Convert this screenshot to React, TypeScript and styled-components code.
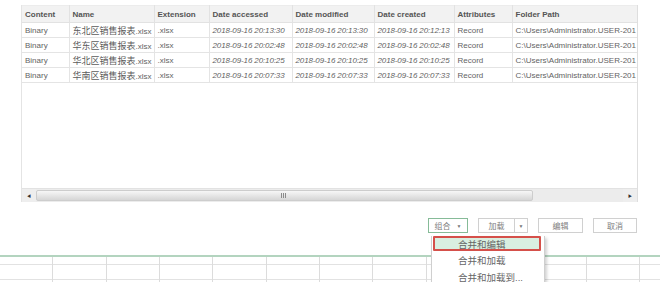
import React from "react";
import styled, { createGlobalStyle } from "styled-components";

const Global = createGlobalStyle`
  html, body { margin: 0; padding: 0; background: #ffffff; }
  body { width: 660px; height: 282px; overflow: hidden; font-family: "Liberation Sans", "Noto Sans CJK SC", sans-serif; }
`;

const Page = styled.div`
  position: relative;
  width: 660px;
  height: 282px;
  overflow: hidden;
  background: #fff;
`;

const Dialog = styled.div`
  height: 255px;
  padding: 5px 0 0 21px;
  box-sizing: border-box;
  display: flex;
  flex-direction: column;
`;

const Frame = styled.div`
  width: 617px;
  height: 197px;
  box-sizing: border-box;
  border-left: 1px solid #e4e4e4;
  border-right: 1px solid #dedede;
  display: flex;
  flex-direction: column;
`;

const TableArea = styled.div`
  flex: 1;
  overflow: hidden;
`;

const Table = styled.table`
  border-collapse: collapse;
  table-layout: fixed;
  width: 616px;
  font-size: 8px;
  color: #636363;
`;

const Th = styled.th`
  height: 16px;
  padding: 0 0 0 3px;
  text-align: left;
  font-weight: bold;
  color: #555;
  background: #f2f2f2;
  border: 1px solid #e2e2e2;
  border-top-color: #ececec;
  white-space: nowrap;
  overflow: hidden;
  &:first-child { border-left: none; }
  &:last-child { border-right: none; }
`;

const Td = styled.td<{ $italic?: boolean }>`
  height: 14px;
  padding: 0 0 0 3px;
  border: 1px solid #e4e4e4;
  white-space: nowrap;
  overflow: hidden;
  font-style: ${(p) => (p.$italic ? "italic" : "normal")};
  letter-spacing: ${(p) => (p.$italic ? "-0.12px" : "0")};
  &:first-child { border-left: none; }
  &:last-child { border-right: none; }
`;

const Cjk = styled.span`
  font-size: 9px;
  color: #5c5c5c;
`;

const Scrollbar = styled.div`
  height: 13px;
  display: flex;
  align-items: stretch;
  background: #ececec;
  border-top: 1px solid #e2e2e2;
`;

const ScrollBtn = styled.div`
  width: 14px;
  display: flex;
  align-items: center;
  justify-content: center;
  font-size: 4px;
  color: #333;
  background: #eeeeee;
`;

const Thumb = styled.div`
  width: 497px;
  margin: 1px 0;
  border: 1px solid #cdcdcd;
  border-radius: 2px;
  background: linear-gradient(#f7f7f7, #d6d6d6);
  display: flex;
  align-items: center;
  padding-left: 244px;
  box-sizing: border-box;
`;

const Grip = styled.div`
  width: 5px;
  height: 5px;
  background: repeating-linear-gradient(90deg, #8a8a8a 0 1px, transparent 1px 2px);
`;

const Track = styled.div`
  flex: 1;
`;

const Buttons = styled.div`
  margin-top: 16px;
  width: 616px;
  display: flex;
  justify-content: flex-end;
  gap: 10px;
`;

const Btn = styled.div<{ $w: number; $active?: boolean }>`
  width: ${(p) => p.$w}px;
  height: 15px;
  box-sizing: border-box;
  border: 1px solid ${(p) => (p.$active ? "#86bb98" : "#d0d0d0")};
  background: #fff;
  display: flex;
  align-items: center;
  justify-content: center;
  gap: 6px;
  font-size: 8px;
  color: #808080;
`;

const Split = styled.div`
  display: flex;
  height: 15px;
`;

const SplitMain = styled.div`
  width: 37px;
  box-sizing: border-box;
  border: 1px solid #d0d0d0;
  display: flex;
  align-items: center;
  justify-content: center;
  font-size: 8px;
  color: #808080;
`;

const SplitArrow = styled.div`
  width: 13px;
  box-sizing: border-box;
  border: 1px solid #d0d0d0;
  border-left: none;
  display: flex;
  align-items: center;
  justify-content: center;
`;

const Caret = styled.span`
  font-size: 5px;
  color: #777;
`;

const Sheet = styled.div`
  border-top: 2px solid #b3d4bf;
  display: flex;
  height: 27px;
`;

const SheetCol = styled.div`
  width: 53.33px;
  flex: none;
  box-sizing: border-box;
  border-right: 1px solid #dcdcdc;
  display: flex;
  flex-direction: column;
`;

const SheetCell = styled.div<{ $h: number }>`
  height: ${(p) => p.$h}px;
  border-bottom: 1px solid #e2e2e2;
  flex: none;
`;

const Menu = styled.div`
  position: absolute;
  left: 431px;
  top: 236px;
  width: 114px;
  height: 60px;
  box-sizing: border-box;
  background: #fff;
  border: 1px solid #cfcfcf;
  border-top: none;
  box-shadow: 2px 2px 3px rgba(0, 0, 0, 0.18);
  padding: 0 3px 0 1px;
  display: flex;
  flex-direction: column;
`;

const MenuItem = styled.div<{ $hl?: boolean }>`
  height: ${(p) => (p.$hl ? "15px" : "17px")};
  box-sizing: border-box;
  padding-left: 23px;
  display: flex;
  align-items: center;
  font-size: 9.5px;
  color: #666;
  background: ${(p) => (p.$hl ? "#d9efe1" : "transparent")};
  border: 2px solid ${(p) => (p.$hl ? "#d5504a" : "transparent")};
  border-radius: 1px;
  margin-bottom: ${(p) => (p.$hl ? "0" : "0")};
`;

type Row = { name: string; acc: string; mod: string; cre: string };
const rows: Row[] = [
  { name: "东北区销售报表", acc: "2018-09-16 20:13:30", mod: "2018-09-16 20:13:30", cre: "2018-09-16 20:12:13" },
  { name: "华东区销售报表", acc: "2018-09-16 20:02:48", mod: "2018-09-16 20:02:48", cre: "2018-09-16 20:02:48" },
  { name: "华北区销售报表", acc: "2018-09-16 20:10:25", mod: "2018-09-16 20:10:25", cre: "2018-09-16 20:10:25" },
  { name: "华南区销售报表", acc: "2018-09-16 20:07:33", mod: "2018-09-16 20:07:33", cre: "2018-09-16 20:07:33" },
];

const widths = [47, 85, 55, 83, 82, 80, 58, 126];
const heads = ["Content", "Name", "Extension", "Date accessed", "Date modified", "Date created", "Attributes", "Folder Path"];

export default function App() {
  return (
    <Page>
      <Global />
      <Dialog>
        <Frame>
          <TableArea>
            <Table>
              <colgroup>
                {widths.map((w, i) => (
                  <col key={i} style={{ width: w }} />
                ))}
              </colgroup>
              <thead>
                <tr>
                  {heads.map((h) => (
                    <Th key={h}>{h}</Th>
                  ))}
                </tr>
              </thead>
              <tbody>
                {rows.map((r) => (
                  <tr key={r.name}>
                    <Td>Binary</Td>
                    <Td>
                      <Cjk>{r.name}</Cjk>.xlsx
                    </Td>
                    <Td>.xlsx</Td>
                    <Td $italic>{r.acc}</Td>
                    <Td $italic>{r.mod}</Td>
                    <Td $italic>{r.cre}</Td>
                    <Td>Record</Td>
                    <Td>C:\Users\Administrator.USER-201</Td>
                  </tr>
                ))}
              </tbody>
            </Table>
          </TableArea>
          <Scrollbar>
            <ScrollBtn>◀</ScrollBtn>
            <Thumb>
              <Grip />
            </Thumb>
            <Track />
            <ScrollBtn>▶</ScrollBtn>
          </Scrollbar>
        </Frame>
        <Buttons>
          <Btn $w={40} $active>
            组合 <Caret>▼</Caret>
          </Btn>
          <Split>
            <SplitMain>加载</SplitMain>
            <SplitArrow>
              <Caret>▼</Caret>
            </SplitArrow>
          </Split>
          <Btn $w={45}>编辑</Btn>
          <Btn $w={44}>取消</Btn>
        </Buttons>
      </Dialog>
      <Sheet>
        {Array.from({ length: 13 }).map((_, i) => (
          <SheetCol key={i}>
            <SheetCell $h={7} />
            <SheetCell $h={14} />
          </SheetCol>
        ))}
      </Sheet>
      <Menu>
        <MenuItem $hl>合并和编辑</MenuItem>
        <MenuItem>合并和加载</MenuItem>
        <MenuItem>合并和加载到...</MenuItem>
      </Menu>
    </Page>
  );
}
